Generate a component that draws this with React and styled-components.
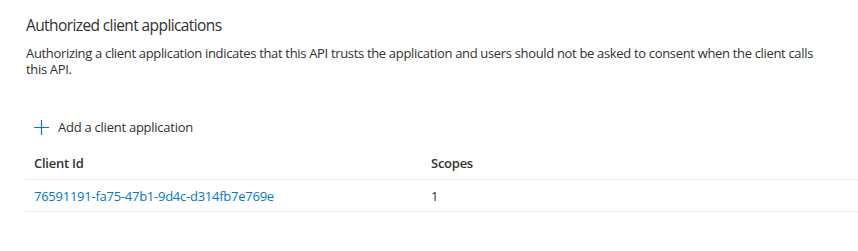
import React from "react";
import styled, { createGlobalStyle } from "styled-components";

const Global = createGlobalStyle`
  html, body { margin: 0; padding: 0; background: #ffffff; }
  body {
    font-family: "Open Sans", "Noto Sans", "Liberation Sans", sans-serif;
    color: #323130;
    letter-spacing: -0.25px;
    -webkit-font-smoothing: antialiased;
  }
`;

const Page = styled.div`
  width: 858px;
  height: 251px;
  box-sizing: border-box;
  padding: 14px 0 0 26px;
  overflow: hidden;
`;

const Title = styled.h2`
  margin: 0;
  font-size: 15.5px;
  line-height: 22px;
  font-weight: 400;
  letter-spacing: -0.6px;
  color: #323130;
`;

const Description = styled.p`
  margin: 9px 0 0 0;
  width: 800px;
  font-size: 13px;
  line-height: 16px;
  letter-spacing: -0.33px;
  color: #323130;
`;

const Toolbar = styled.div`
  display: flex;
  align-items: center;
  margin-top: 34px;
  height: 32px;
`;

const CommandButton = styled.button`
  display: flex;
  align-items: center;
  gap: 9px;
  height: 32px;
  padding: 0 0 0 8px;
  border: none;
  background: transparent;
  font-family: inherit;
  letter-spacing: inherit;
  font-size: 13px;
  color: #323130;
  cursor: pointer;
`;

const Table = styled.div`
  margin-top: 3px;
  margin-left: -1px;
  display: flex;
  flex-direction: column;
`;

const Row = styled.div`
  display: grid;
  grid-template-columns: 397px 1fr;
  height: ${(p) => p.$h}px;
  border-bottom: 1px solid #edebe9;
`;

const Cell = styled.div`
  display: flex;
  align-items: center;
  padding-left: 9px;
  font-size: 13px;
  line-height: 16px;
  font-weight: ${(p) => (p.$head ? 600 : 400)};
  color: #323130;
`;

const Link = styled.a`
  color: #0078d4;
  text-decoration: none;
`;

const PlusIcon = () => (
  <svg width="15" height="15" viewBox="0 0 15 15" aria-hidden="true">
    <path d="M7.5 0 V15 M0 7.5 H15" stroke="#0078d4" strokeWidth="1.2" fill="none" />
  </svg>
);

export default function App() {
  return (
    <>
      <Global />
      <Page>
        <Title>Authorized client applications</Title>
        <Description>
          Authorizing a client application indicates that this API trusts the application and users should not be asked to consent when the client calls this API.
        </Description>
        <Toolbar>
          <CommandButton>
            <PlusIcon />
            Add a client application
          </CommandButton>
        </Toolbar>
        <Table>
          <Row $h={33}>
            <Cell $head>Client Id</Cell>
            <Cell $head>Scopes</Cell>
          </Row>
          <Row $h={31}>
            <Cell>
              <Link href="#">76591191-fa75-47b1-9d4c-d314fb7e769e</Link>
            </Cell>
            <Cell>1</Cell>
          </Row>
        </Table>
      </Page>
    </>
  );
}
